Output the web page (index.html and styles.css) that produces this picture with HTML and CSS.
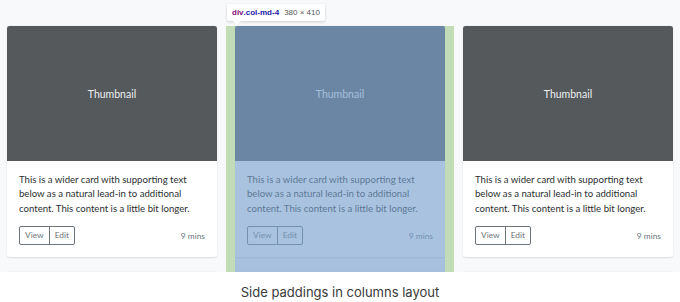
FILE: index.html
```html
<!DOCTYPE html>
<html lang="en">
  <head>
    <meta charset="UTF-8" />
    <meta name="viewport" content="width=device-width, initial-scale=1.0" />
    <title>Side paddings in columns layout</title>
    <link rel="stylesheet" href="styles.css">
  </head>
  <body>
    <div class="stage">
      <div class="row">
        <!-- Columna 1 -->
        <div class="col">
          <div class="card">
            <div class="thumb">Thumbnail</div>
            <div class="card-body">
              <p class="card-text">This is a wider card with supporting text below as a natural lead-in to additional content. This content is a little bit longer.</p>
              <div class="card-footer">
                <div class="btn-group">
                  <button class="btn">View</button>
                  <button class="btn">Edit</button>
                </div>
                <small class="muted">9 mins</small>
              </div>
            </div>
          </div>
          <div class="card">
            <div class="thumb"></div>
          </div>
        </div>

        <!-- Columna 2 (inspeccionada) -->
        <div class="col inspected">
          <div class="card">
            <div class="thumb">Thumbnail</div>
            <div class="card-body">
              <p class="card-text">This is a wider card with supporting text below as a natural lead-in to additional content. This content is a little bit longer.</p>
              <div class="card-footer">
                <div class="btn-group">
                  <button class="btn">View</button>
                  <button class="btn">Edit</button>
                </div>
                <small class="muted">9 mins</small>
              </div>
            </div>
          </div>
          <div class="card">
            <div class="thumb"></div>
          </div>
          <div class="hl-pad hl-left"></div>
          <div class="hl-content"></div>
          <div class="hl-pad hl-right"></div>
          <div class="tooltip">
            <span class="tag">div</span><span class="cls">.col-md-4</span>
            <span class="size">380 × 410</span>
          </div>
        </div>

        <!-- Columna 3 -->
        <div class="col">
          <div class="card">
            <div class="thumb">Thumbnail</div>
            <div class="card-body">
              <p class="card-text">This is a wider card with supporting text below as a natural lead-in to additional content. This content is a little bit longer.</p>
              <div class="card-footer">
                <div class="btn-group">
                  <button class="btn">View</button>
                  <button class="btn">Edit</button>
                </div>
                <small class="muted">9 mins</small>
              </div>
            </div>
          </div>
          <div class="card">
            <div class="thumb"></div>
          </div>
        </div>
      </div>
    </div>
    <p class="caption">Side paddings in columns layout</p>
  </body>
</html>
```

FILE: styles.css
```css
/* Estilos generales */
body {
  margin: 0;
  padding: 0;
  background-color: #fff;
  font-family: Lato, "Open Sans", Arial, sans-serif;
}

/* Zona de la captura */
.stage {
  height: 272px;
  padding-top: 26px;
  box-sizing: border-box;
  background-color: #f8f9fa;
  overflow: hidden;
}

.row {
  display: flex;
  margin-left: -2px;
}

.col {
  flex: 0 0 228px;
  box-sizing: border-box;
  padding: 0 9px;
}

/* Tarjetas */
.card {
  display: flex;
  flex-direction: column;
  margin-bottom: 14.4px;
  background-color: #fff;
  border-radius: 2.4px;
  box-shadow: 0 0.6px 1.5px rgba(0, 0, 0, 0.12);
  overflow: hidden;
}

.thumb {
  height: 135px;
  display: flex;
  align-items: center;
  justify-content: center;
  background-color: #55595c;
  color: #eceeef;
  font-size: 10.5px;
}

.card-body {
  padding: 12px;
}

.card-text {
  margin: 0 0 9.6px;
  font-size: 9.6px;
  line-height: 14.4px;
  color: #2b2f33;
}

.card-footer {
  display: flex;
  justify-content: space-between;
  align-items: center;
}

.btn-group {
  display: flex;
}

.btn {
  margin: 0;
  padding: 2.4px 5px;
  font-family: inherit;
  font-size: 8.4px;
  line-height: 12.6px;
  color: #6c757d;
  background: transparent;
  border: 1px solid #6c757d;
}

.btn:first-child {
  border-radius: 2px 0 0 2px;
}

.btn + .btn {
  margin-left: -1px;
  border-radius: 0 2px 2px 0;
}

.muted {
  font-size: 8.4px;
  color: #6c757d;
}

/* Resaltado del inspector */
.inspected {
  position: relative;
}

.hl-pad,
.hl-content {
  position: absolute;
  top: 0;
  bottom: 0;
}

.hl-pad {
  width: 9px;
  background-color: rgba(147, 196, 125, 0.55);
}

.hl-left {
  left: 0;
}

.hl-right {
  right: 0;
}

.hl-content {
  left: 9px;
  right: 9px;
  background-color: rgba(120, 160, 205, 0.64);
}

.tooltip {
  position: absolute;
  left: 1px;
  top: -22px;
  height: 17px;
  padding: 0 5px;
  display: flex;
  align-items: center;
  background-color: #fff;
  border-radius: 2px;
  box-shadow: 0 1px 3px rgba(0, 0, 0, 0.18);
  font-family: "Liberation Sans", Arial, sans-serif;
  font-size: 8px;
  white-space: nowrap;
}

.tooltip::after {
  content: "";
  position: absolute;
  left: 6px;
  bottom: -4px;
  border-left: 4px solid transparent;
  border-right: 4px solid transparent;
  border-top: 4px solid #fff;
}

.tag {
  color: #881280;
  font-weight: bold;
}

.cls {
  color: #1a1aa6;
  font-weight: bold;
}

.size {
  margin-left: 5px;
  color: #555;
}

/* Pie */
.caption {
  margin: 0;
  height: 30px;
  padding-top: 5px;
  box-sizing: border-box;
  line-height: 30px;
  text-align: center;
  font-family: Inter, "Noto Sans", sans-serif;
  font-size: 13px;
  color: #3a3a3a;
}
```
